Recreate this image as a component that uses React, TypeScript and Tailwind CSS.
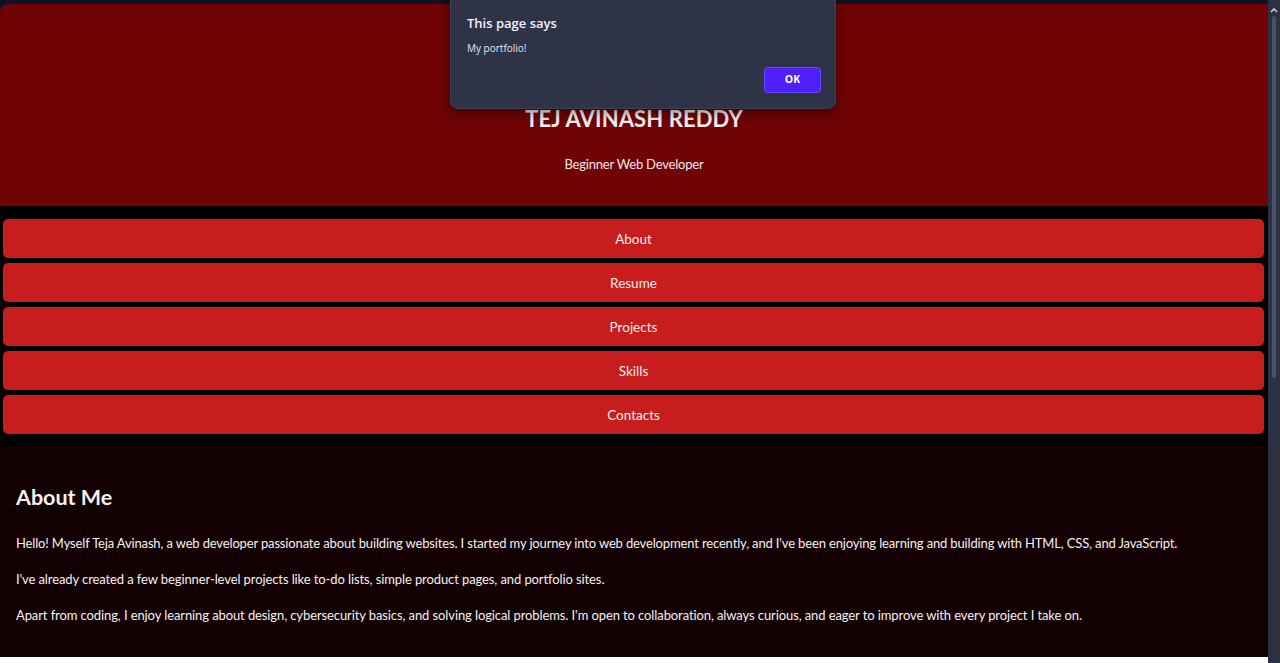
import React from "react";

const navItems = ["About", "Resume", "Projects", "Skills", "Contacts"];

export default function App() {
  return (
    <div className="relative w-[1280px] h-[663px] overflow-hidden bg-white flex" style={{ fontFamily: "Lato, 'Open Sans', sans-serif" }}>
      <div className="flex-1 flex flex-col">
        <div className="h-[4px] bg-[#0e1222]" />
        <div className="bg-[#0e1222]">
          <header className="h-[202px] bg-[#700404] rounded-tl-lg flex flex-col items-center pt-[104px]">
            <h1 className="text-[22px] font-bold text-[#f6eff4] tracking-[0.1px] leading-none">TEJ AVINASH REDDY</h1>
            <p className="mt-[28px] text-[13px] tracking-[-0.2px] text-[#f3e6e6] leading-none">Beginner Web Developer</p>
          </header>
        </div>
        <nav className="bg-black pt-[13px] pb-[12px] pl-[3px] pr-[4px] flex flex-col gap-[5px]">
          {navItems.map((n) => (
            <div key={n} className="h-[39px] bg-[#c81d1d] rounded-[5px] flex items-center justify-center pt-[1px] text-[13.5px] text-[#f7eeee]">
              {n}
            </div>
          ))}
        </nav>
        <section className="h-[211px] bg-[#120002] px-[16px] pt-[41px] text-[#f7f1f1]">
          <h2 className="text-[21.5px] font-bold leading-none">About Me</h2>
          <p className="mt-[28px] text-[13px] tracking-[-0.15px] leading-none whitespace-nowrap">
            Hello! Myself Teja Avinash, a web developer passionate about building websites. I started my journey into web development recently, and I've been enjoying learning and building with HTML, CSS, and JavaScript.
          </p>
          <p className="mt-[23px] text-[13px] tracking-[-0.1px] leading-none">
            I've already created a few beginner-level projects like to-do lists, simple product pages, and portfolio sites.
          </p>
          <p className="mt-[23px] text-[13px] tracking-[-0.1px] leading-none">
            Apart from coding, I enjoy learning about design, cybersecurity basics, and solving logical problems. I'm open to collaboration, always curious, and eager to improve with every project I take on.
          </p>
        </section>
      </div>
      <div className="w-[12px] h-full bg-[#2c3142] flex flex-col items-center">
        <svg width="8" height="6" viewBox="0 0 8 6" className="mt-[7px]">
          <path d="M1 5 L4 2 L7 5" stroke="#c8ccd8" strokeWidth="1.6" fill="none" />
        </svg>
        <div className="mt-[3px] w-[4px] h-[362px] rounded-full bg-[#4a5168]" />
      </div>

      <div className="absolute left-[450px] top-[-11px] w-[386px] h-[120px] bg-[#2e3348] rounded-lg border border-[#3c4157] shadow-[0_4px_12px_rgba(0,0,0,0.45)]" style={{ fontFamily: "'Open Sans', 'Noto Sans', sans-serif" }}>
        <div className="absolute left-[16px] top-[24px] text-[13px] font-semibold text-[#f2f3f7]">This page says</div>
        <div className="absolute left-[16px] top-[51px] text-[10px] text-[#e6e7ee]">My portfolio!</div>
        <div className="absolute left-[313px] top-[77px] w-[57px] h-[26px] bg-[#5020fb] border border-[#6a48ff] rounded-[4px] flex items-center justify-center text-[10.5px] font-bold text-white">
          OK
        </div>
      </div>
    </div>
  );
}
